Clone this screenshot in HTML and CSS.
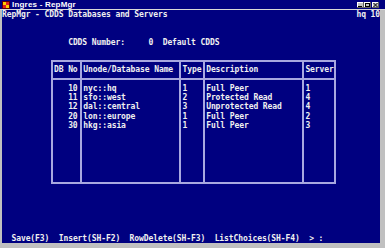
FILE: index.html
```html
<!DOCTYPE html>
<html>
<head>
<meta charset="utf-8">
<link rel="stylesheet" href="styles.css">
</head>
<body>
<div class="window">
  <div class="titlebar">
    <svg class="appicon" width="8" height="8" viewBox="0 0 8 8">
      <rect x="0" y="0" width="8" height="8" fill="#600000"/>
      <rect x="1" y="1" width="3" height="3" fill="#ffcc00"/>
      <rect x="4" y="1" width="3" height="3" fill="#e02020"/>
      <rect x="1" y="4" width="3" height="3" fill="#e02020"/>
      <rect x="4" y="4" width="3" height="3" fill="#ffcc00"/>
    </svg>
    <span class="title">Ingres - RepMgr</span>
    <div class="buttons">
      <span class="btn"><svg width="7" height="6" viewBox="0 0 7 6"><rect x="1" y="4" width="4" height="1" fill="#000"/></svg></span>
      <span class="btn"><svg width="7" height="6" viewBox="0 0 7 6"><rect x="1.5" y="1.5" width="4" height="3" fill="none" stroke="#000" stroke-width="1"/></svg></span>
      <span class="btn btn-close"><svg width="7" height="6" viewBox="0 0 7 6"><path d="M1.5 1 L5.5 5 M5.5 1 L1.5 5" stroke="#000" stroke-width="1"/></svg></span>
    </div>
  </div>
  <div class="screen">
    <div class="ln">RepMgr - CDDS Databases and Servers                                        hq 10</div>
    <div class="ln"> </div>
    <div class="ln"> </div>
    <div class="ln">              CDDS Number:     0  Default CDDS</div>
    <div class="ln"> </div>
    <div class="tbl">
      <div class="th c1">DB No</div>
      <div class="th">Unode/Database Name</div>
      <div class="th">Type</div>
      <div class="th">Description</div>
      <div class="th">Server</div>
      <div class="td c1"><div class="ln">   10</div><div class="ln">   11</div><div class="ln">   12</div><div class="ln">   20</div><div class="ln">   30</div></div>
      <div class="td"><div class="ln">nyc::hq</div><div class="ln">sfo::west</div><div class="ln">dal::central</div><div class="ln">lon::europe</div><div class="ln">hkg::asia</div></div>
      <div class="td"><div class="ln">1</div><div class="ln">2</div><div class="ln">3</div><div class="ln">1</div><div class="ln">1</div></div>
      <div class="td"><div class="ln">Full Peer</div><div class="ln">Protected Read</div><div class="ln">Unprotected Read</div><div class="ln">Full Peer</div><div class="ln">Full Peer</div></div>
      <div class="td"><div class="ln">1</div><div class="ln">4</div><div class="ln">4</div><div class="ln">2</div><div class="ln">3</div></div>
    </div>
    <div class="spacer"></div>
    <div class="ln">  Save(F3)  Insert(SH-F2)  RowDelete(SH-F3)  ListChoices(SH-F4)  &gt; :</div>
  </div>
</div>
</body>
</html>
```
FILE: styles.css
```css
:root {
  --cw: 4.725px;
  --lh: 9.33px;
  --navy: #000080;
  --line: #a8a8e0;
}
html, body {
  margin: 0;
  padding: 0;
  background: #c0c0c0;
  overflow: hidden;
}
.window {
  width: 385px;
  height: 248px;
  box-sizing: border-box;
  background: #c0c0c0;
  padding: 0 5px 0 2px;
  display: flex;
  flex-direction: column;
}
.titlebar {
  height: 9px;
  margin-left: -2px;
  margin-right: -5px;
  padding: 0 5px 0 2px;
  background: #000080;
  display: flex;
  align-items: center;
  border-bottom: 1px solid #d8d8d8;
}
.appicon {
  display: block;
  margin-right: 2px;
}
.title {
  font-family: "Liberation Sans", Arial, sans-serif;
  font-weight: bold;
  font-size: 8px;
  line-height: 9px;
  color: #ffffff;
  letter-spacing: 0.2px;
}
.buttons {
  margin-left: auto;
  display: flex;
  gap: 0;
  margin-right: 1px;
}
.btn {
  width: 7px;
  height: 6px;
  background: #c0c0c0;
  box-shadow: inset -1px -1px 0 #606060, inset 1px 1px 0 #ffffff;
  display: block;
}
.btn svg { display: block; }
.btn-close { margin-left: 1px; }
.screen {
  height: 233px;
  background: var(--navy);
  color: #f0f0f0;
  font-family: "DejaVu Sans Mono", "Liberation Mono", monospace;
  font-size: 8px;
  font-weight: bold;
  letter-spacing: -0.091px;
  overflow: hidden;
  display: flex;
  flex-direction: column;
}
.ln {
  height: var(--lh);
  line-height: var(--lh);
  white-space: pre;
  flex: none;
}
.tbl {
  flex: none;
  margin-top: calc(var(--lh) * 0.5 - 1px);
  margin-left: calc(var(--cw) * 10.5 - 1px);
  width: calc(var(--cw) * 60 + 2px);
  height: calc(var(--lh) * 13 + 2px);
  box-sizing: border-box;
  border: 2px solid var(--line);
  display: grid;
  grid-template-columns: calc(var(--cw) * 6 - 1px) calc(var(--cw) * 21) calc(var(--cw) * 5) calc(var(--cw) * 21) calc(var(--cw) * 7 - 1px);
  grid-template-rows: calc(var(--lh) * 2 - 1px) 1fr;
}
.th, .td {
  border-left: 2px solid var(--line);
  padding-left: calc(var(--cw) * 0.5 - 1px);
  white-space: pre;
}
.c1 {
  border-left: none;
  padding-left: calc(var(--cw) * 0.5 - 1px);
}
.th {
  border-bottom: 2px solid var(--line);
  line-height: calc(var(--lh) * 2 - 3px);
}
.td {
  padding-top: calc(var(--lh) * 0.5 - 1px);
}
.spacer {
  height: calc(var(--lh) * 5.5 - 1px);
  flex: none;
}
```
